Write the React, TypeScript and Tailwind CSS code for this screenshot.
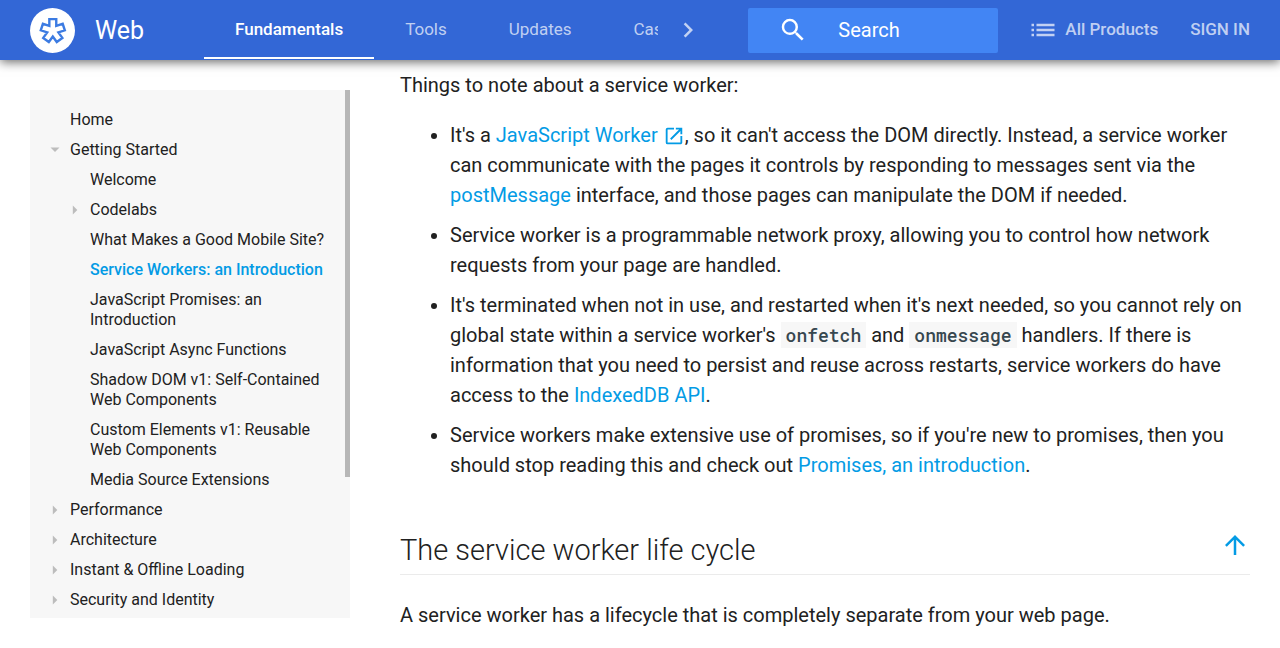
import React from 'react';

type Item = { label: string; level: 0 | 1; arrow?: 'open' | 'closed'; active?: boolean };

const items: Item[] = [
  { label: 'Home', level: 0 },
  { label: 'Getting Started', level: 0, arrow: 'open' },
  { label: 'Welcome', level: 1 },
  { label: 'Codelabs', level: 1, arrow: 'closed' },
  { label: 'What Makes a Good Mobile Site?', level: 1 },
  { label: 'Service Workers: an Introduction', level: 1, active: true },
  { label: 'JavaScript Promises: an Introduction', level: 1 },
  { label: 'JavaScript Async Functions', level: 1 },
  { label: 'Shadow DOM v1: Self-Contained Web Components', level: 1 },
  { label: 'Custom Elements v1: Reusable Web Components', level: 1 },
  { label: 'Media Source Extensions', level: 1 },
  { label: 'Performance', level: 0, arrow: 'closed' },
  { label: 'Architecture', level: 0, arrow: 'closed' },
  { label: 'Instant & Offline Loading', level: 0, arrow: 'closed' },
  { label: 'Security and Identity', level: 0, arrow: 'closed' },
];

const tabs = ['Fundamentals', 'Tools', 'Updates', 'Case Studies'];

function Logo() {
  return (
    <svg viewBox="0 0 45 45" className="size-[45px] shrink-0" aria-hidden="true">
      <circle cx="22.5" cy="22.5" r="22.5" fill="#fff" />
      <path
        d="M-3.6 -12H3.6V-4.95L10.3 -7.13L12.52 -.28L5.82 1.89L9.97 7.59L4.14 11.83L0 6.12L-4.14 11.83L-9.97 7.59L-5.82 1.89L-12.52 -.28L-10.3 -7.13L-3.6 -4.95Z"
        transform="translate(22.8 22.6) scale(0.96)"
        fill="none"
        stroke="#3c7be2"
        strokeWidth="2.5"
      />
    </svg>
  );
}

function Arrow({ kind }: { kind: 'open' | 'closed' }) {
  return (
    <svg viewBox="0 0 10 10" className="size-[10px]" fill="#bdbdbd" aria-hidden="true">
      {kind === 'open' ? <path d="M.5 2.500h9L5 7z" /> : <path d="M2.800.5v9L7.300 5z" />}
    </svg>
  );
}

function Header() {
  return (
    <header className="relative z-10 flex h-[60px] items-center bg-[#3367d6] px-[30px] text-white shadow-[0_2px_10px_rgba(0,0,0,0.6)]">
      <a href="#home" className="flex w-[174px] shrink-0 items-center gap-5 text-[25px] leading-[30px]">
        <Logo />
        <span className="pt-0.5">Web</span>
      </a>
      <nav className="flex h-full min-w-0 flex-1 overflow-hidden text-[17px]">
        {tabs.map((tab, i) => (
          <a
            key={tab}
            href="#tab"
            className={
              i === 0
                ? 'flex h-[59px] shrink-0 items-center border-b-2 border-white px-[31px] pt-0.5 font-medium'
                : 'flex h-[59px] shrink-0 items-center px-[31px] text-white/70'
            }
          >
            {tab}
          </a>
        ))}
      </nav>
      <button aria-label="More tabs" className="flex h-full w-[60px] shrink-0 items-center justify-center text-white/70">
        <svg viewBox="0 0 24 24" className="size-[30px]" fill="currentColor">
          <path d="M10 6L8.59 7.41 13.17 12l-4.58 4.59L10 18l6-6z" />
        </svg>
      </button>
      <label className="ml-[30px] flex h-[45px] w-[250px] shrink-0 items-center gap-[30px] rounded-[2px] bg-[#4285f4] pl-[30px]">
        <svg viewBox="0 0 24 24" className="size-[30px] shrink-0" fill="currentColor" aria-hidden="true">
          <path d="M15.5 14h-.79l-.28-.27A6.471 6.471 0 0 0 16 9.5 6.5 6.5 0 1 0 9.5 16c1.61 0 3.09-.59 4.23-1.57l.27.28v.79l5 4.99L20.49 19l-4.99-5zm-6 0C7.01 14 5 11.99 5 9.5S7.01 5 9.5 5 14 7.01 14 9.5 11.99 14 9.5 14z" />
        </svg>
        <input
          type="text"
          aria-label="Search"
          placeholder="Search"
          className="w-full min-w-0 bg-transparent text-[20px] text-white outline-none placeholder:text-white"
        />
      </label>
      <a href="#products" className="ml-8 flex shrink-0 items-center gap-[5px] text-[17px] font-medium text-white/70">
        <svg viewBox="0 0 30 30" className="size-[30px]" fill="currentColor" aria-hidden="true">
          <path d="M1.500 8.700h2.500v2.500h-2.500zM1.500 13.700h2.500v2.500h-2.500zM1.500 18.700h2.500v2.500h-2.500zM6.500 8.700h18v2.500h-18zM6.500 13.700h18v2.500h-18zM6.500 18.700h18v2.500h-18z" />
        </svg>
        All Products
      </a>
      <a href="#signin" className="ml-8 shrink-0 text-[17px] font-medium text-white/70">
        SIGN IN
      </a>
    </header>
  );
}

function Sidebar() {
  return (
    <nav className="relative w-80 shrink-0 bg-[#f7f7f7] pt-[15px] pb-[3px]">
      <ul>
        {items.map((it) => (
          <li key={it.label} className={it.level === 0 ? 'flex pr-5 pl-5' : 'flex pr-5 pl-10'}>
            <span className="flex h-[30px] w-5 shrink-0 items-center">{it.arrow && <Arrow kind={it.arrow} />}</span>
            <a
              href="#page"
              className={
                it.active
                  ? 'py-[5px] text-[16px] leading-5 font-medium text-[#039be5]'
                  : 'py-[5px] text-[16px] leading-5'
              }
            >
              {it.label}
            </a>
          </li>
        ))}
      </ul>
      <div className="absolute top-0 right-0 h-[387px] w-[5px] bg-[#b7b7b7]" />
    </nav>
  );
}

function Link({ children }: { children: React.ReactNode }) {
  return (
    <a href="#ref" className="text-[#039be5]">
      {children}
    </a>
  );
}

function Code({ children }: { children: React.ReactNode }) {
  return (
    <code className="bg-[#f7f7f7] px-[5px] py-[1px] font-['Roboto_Mono','Liberation_Mono',monospace] text-[18px] font-medium text-[#37474f]">
      {children}
    </code>
  );
}

export default function App() {
  return (
    <div className="min-h-screen bg-white font-['Roboto',sans-serif] text-[#212121]">
      <Header />
      <div className="flex items-start gap-[50px] px-[30px]">
        <div className="shrink-0 pt-[30px]">
          <Sidebar />
        </div>
        <main className="min-w-0 flex-1 pt-[10px] text-[20px] leading-[30px]">
          <p>Things to note about a service worker:</p>
          <ul className="mt-5 list-disc space-y-[10px] pl-[50px]">
            <li>
              It's a{' '}
              <Link>
                JavaScript Worker{' '}
                <svg viewBox="0 0 24 24" className="inline size-[22px] align-[-5px]" fill="currentColor" aria-hidden="true">
                  <path d="M19 19H5V5h7V3H5a2 2 0 0 0-2 2v14a2 2 0 0 0 2 2h14c1.100 0 2-.9 2-2v-7h-2v7zM14 3v2h3.590l-9.830 9.830 1.410 1.410L19 6.410V10h2V3h-7z" />
                </svg>
              </Link>
              , so it can't access the DOM directly. Instead, a service worker can communicate with the pages it
              controls by responding to messages sent via the <Link>postMessage</Link> interface, and those pages can
              manipulate the DOM if needed.
            </li>
            <li>
              Service worker is a programmable network proxy, allowing you to control how network requests from your
              page are handled.
            </li>
            <li>
              It's terminated when not in use, and restarted when it's next needed, so you cannot rely on global state
              within a service worker's <Code>onfetch</Code> and <Code>onmessage</Code> handlers. If there is
              information that you need to persist and reuse across restarts, service workers do have access to the{' '}
              <Link>IndexedDB API</Link>.
            </li>
            <li>
              Service workers make extensive use of promises, so if you're new to promises, then you should stop
              reading this and check out <Link>Promises, an introduction</Link>.
            </li>
          </ul>
          <div className="mt-[50px] flex items-start justify-between border-b border-[#ebebeb] pb-1">
            <h2 className="text-[29px] leading-[40px] font-light">The service worker life cycle</h2>
            <button aria-label="Back to top" className="text-[#039be5]">
              <svg viewBox="0 0 24 24" className="size-[30px]" fill="currentColor">
                <path d="M4 12l1.410 1.410L11 7.830V20h2V7.830l5.580 5.590L20 12l-8-8-8 8z" />
              </svg>
            </button>
          </div>
          <p className="mt-[25px]">A service worker has a lifecycle that is completely separate from your web page.</p>
        </main>
      </div>
    </div>
  );
}
